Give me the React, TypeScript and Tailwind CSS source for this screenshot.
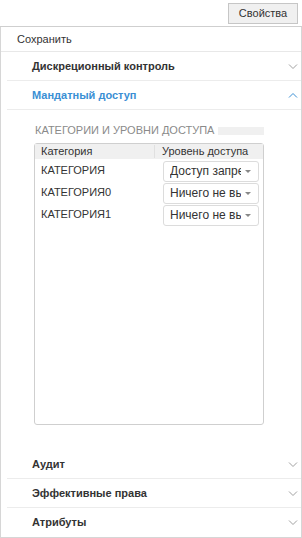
import React from 'react';

type Row = { category: string; level: string };

const ROWS: Row[] = [
  { category: 'КАТЕГОРИЯ', level: 'Доступ запрещён' },
  { category: 'КАТЕГОРИЯ0', level: 'Ничего не выбрано' },
  { category: 'КАТЕГОРИЯ1', level: 'Ничего не выбрано' },
];

function Chevron({ up = false, color }: { up?: boolean; color: string }) {
  return (
    <svg width="10" height="5" viewBox="0 0 10 5" fill="none" className="shrink-0">
      <polyline
        points={up ? '1,4.5 5,0.5 9,4.5' : '1,0.5 5,4.5 9,0.5'}
        stroke={color}
        strokeWidth="1"
      />
    </svg>
  );
}

function SectionHeader({
  title,
  open = false,
  last = false,
}: {
  title: string;
  open?: boolean;
  last?: boolean;
}) {
  return (
    <div
      className={
        last
          ? 'ml-[6px] flex h-[29px] items-center justify-between pl-[25px] pr-[3px]'
          : 'ml-[6px] flex h-[29px] items-center justify-between border-b border-[#ececec] pl-[25px] pr-[3px]'
      }
    >
      <span className={open ? 'font-bold text-[#3a8fd4]' : 'font-bold text-[#333]'}>{title}</span>
      <Chevron up={open} color={open ? '#3a8fd4' : '#a0a0a0'} />
    </div>
  );
}

function LevelSelect({ value }: { value: string }) {
  return (
    <div className="flex h-[21px] w-[96px] items-center rounded-[3px] border border-[#dcdcdc] bg-white pl-[6px] pr-[7px]">
      <span className="flex-1 overflow-hidden whitespace-nowrap text-[12px] text-[#333]">{value}</span>
      <span className="ml-[4px] h-0 w-0 border-x-[3px] border-t-[3px] border-x-transparent border-t-[#888]" />
    </div>
  );
}

export default function App() {
  return (
    <div className="h-[538px] w-[302px] bg-white font-['Liberation_Sans',Arial,sans-serif] text-[11px] leading-[13px] text-[#333]">
      <div className="flex h-[27px] justify-end border-b border-[#cfcfcf] pr-[4px] pt-[3px]">
        <button className="h-[21px] w-[70px] border border-[#c6c6c6] bg-[#f0f0f0] text-[11px] text-[#333]">
          Свойства
        </button>
      </div>

      <div className="flex h-[511px] flex-col border-x border-b border-[#d6d6d6]">
        <div className="flex h-[25px] items-center border-b border-[#e8e8e8] pl-[16px]">Сохранить</div>

        <SectionHeader title="Дискреционный контроль" />
        <SectionHeader title="Мандатный доступ" open />

        <div className="ml-[6px] flex h-[340px] flex-col pl-[27px] pt-[14px]">
          <div className="flex w-[230px] items-center">
            <span className="whitespace-nowrap pl-[1px] uppercase text-[#8a8a8a]">Категории и уровни доступа</span>
            <span className="ml-[4px] h-[8px] flex-1 bg-[#f0f0f0]" />
          </div>

          <div className="mt-[6px] h-[282px] w-[230px] rounded-[3px] border border-[#cfcfcf]">
            <div className="flex h-[15px] items-center bg-[#f0f0f0]">
              <div className="w-[120px] border-r border-[#e0e0e0] pl-[6px]">Категория</div>
              <div className="pl-[7px]">Уровень доступа</div>
            </div>
            <div className="pt-[2px]">
              {ROWS.map((row) => (
                <div key={row.category} className="flex h-[22px] items-start">
                  <div className="w-[120px] pl-[6px] pt-[3px]">{row.category}</div>
                  <div className="pl-[8px]">
                    <LevelSelect value={row.level} />
                  </div>
                </div>
              ))}
            </div>
          </div>
        </div>

        <SectionHeader title="Аудит" />
        <SectionHeader title="Эффективные права" />
        <SectionHeader title="Атрибуты" last />
      </div>
    </div>
  );
}
